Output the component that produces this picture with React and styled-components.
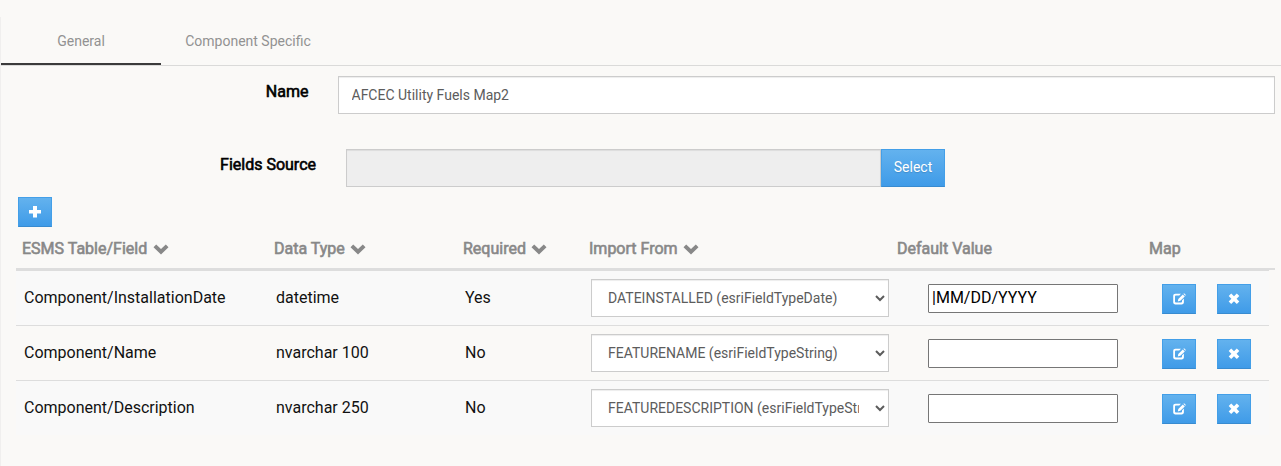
import React from "react";
import styled, { createGlobalStyle, css } from "styled-components";

const GlobalStyle = createGlobalStyle`
  *, *::before, *::after { box-sizing: border-box; }
  body {
    margin: 0;
    background: #faf9f7;
    color: #000;
    font-family: Roboto, "Liberation Sans", sans-serif;
    font-size: 16px;
    line-height: 24px;
  }
`;

const Page = styled.div`
  height: 466px;
  padding-top: 17px;
  overflow: hidden;
`;

const Panel = styled.main`
  height: 449px;
  border-left: 1px solid #f0efee;
`;

const Tabs = styled.nav`
  display: flex;
  height: 49px;
  border-bottom: 1px solid #dadad9;
`;

const Tab = styled.a`
  display: flex;
  align-items: center;
  justify-content: center;
  width: ${(p) => p.$width}px;
  height: 48px;
  border-bottom: 2px solid ${(p) => (p.$active ? "#3b3b3b" : "transparent")};
  color: #929292;
  font-size: 14px;
  padding-top: 2px;
`;

const heavy = css`
  -webkit-text-stroke: 0.6px currentColor;
`;

const FormRow = styled.div`
  display: flex;
  align-items: flex-start;
  padding: ${(p) => p.$padding};
`;

const Label = styled.label`
  width: ${(p) => p.$width}px;
  padding-top: 4px;
  text-align: right;
  ${heavy}
`;

const control = css`
  height: 38px;
  border: 1px solid #ccc;
  border-radius: 0;
  padding: 6px 12px;
  background: #fff;
  color: #5c5c5c;
  font-family: inherit;
  font-size: 14px;
  box-shadow: inset 0 1px 1px rgba(0, 0, 0, 0.075);
`;

const TextControl = styled.input`
  ${control}
  width: ${(p) => p.$width}px;
  margin-left: ${(p) => p.$gap}px;
  padding-left: 12.5px;
  &:disabled { background: #eee; }
`;

const BlueButton = styled.button`
  display: flex;
  align-items: center;
  justify-content: center;
  flex: none;
  width: ${(p) => p.$width || 34}px;
  height: ${(p) => p.$height || 30}px;
  padding: 0 0 ${(p) => p.$lift || 0}px;
  border: 1px solid #439fe8;
  border-bottom-color: #388bd0;
  border-radius: 0;
  background: linear-gradient(#63b2ee, #3f9be8);
  color: #fff;
  font-family: inherit;
  font-size: 14px;
  text-shadow: 0 1px 1px rgba(0, 0, 0, 0.15);
`;

const Toolbar = styled.div`
  padding: 10px 0 0 17px;
`;

const Table = styled.section`
  padding: 0 6px 0 15px;
`;

const columns = css`
  display: grid;
  grid-template-columns: 252px 189px 126px 308px 252px 1fr;
`;

const HeaderRow = styled.div`
  ${columns}
  height: 43px;
  padding-top: 10px;
  border-bottom: 2px solid #ddd;
  color: #888;
`;

const HeaderCell = styled.div`
  display: flex;
  gap: 5.5px;
  padding-left: 6px;
  ${heavy}
`;

const Row = styled.div`
  ${columns}
  width: 1253px;
  height: 55px;
  border-top: 1px solid #ddd;
  background: ${(p) => (p.$striped ? "#f9f9f9" : "transparent")};
`;

const Cell = styled.div`
  padding: 15px 0 0 8px;
  color: #111;
`;

const SelectCell = styled.div`
  padding: 8px 0 0 8px;
`;

const DefaultCell = styled.div`
  padding: 13px 0 0 37px;
`;

const ActionCell = styled.div`
  display: flex;
  gap: 21px;
  padding: 13px 0 0 19px;
`;

const SourceSelect = styled.select`
  ${control}
  width: 298px;
  padding-right: 13px;
`;

const DefaultInput = styled.input`
  display: block;
  width: 190px;
  height: 29px;
  padding: 0 3px 2px;
  border: 1px solid #767676;
  border-radius: 1px;
  background: #fff;
  color: #000;
  font-family: inherit;
  font-size: 16px;
`;

const Glyph = styled.svg`
  display: block;
  flex: none;
  fill: currentColor;
`;

const Chevron = () => (
  <Glyph width="16" height="24" viewBox="0 0 16 24">
    <path d="M.5 10.2 3.2 7.5 8 12.1l4.8-4.6 2.7 2.7L8 17.5z" />
  </Glyph>
);

const Plus = () => (
  <Glyph width="12" height="12" viewBox="0 0 12 12">
    <path d="M4 0h4v4h4v3.500H8V11.500H4V7.500H0V4h4z" />
  </Glyph>
);

const Edit = () => (
  <Glyph width="14" height="12" viewBox="0 0 14 12">
    <path d="M9 .8 7.200 2.500H3.900c-.6 0-.9.300-.9.900v5.200c0 .6.300.9.900.9h5.200c.6 0 .9-.300.9-.9V7.500l1.900-1.900v3.600c0 1.300-.9 2.200-2.200 2.200H3.400c-1.300 0-2.200-.9-2.200-2.200V3C1.200 1.700 2.100.8 3.400.8z" />
    <path d="m10.800 1.500 2 2-4.500 4.300-2.500.7.500-2.600zM11.400.8l.7-.6 1.800 1.800-.7.800z" />
  </Glyph>
);

const Remove = () => (
  <Glyph width="12" height="12" viewBox="0 0 12 12">
    <path d="M3.200.6 6 3.200 8.800.6l2.500 2.400-2.700 2.800 2.700 2.700-2.500 2.500L6 8.300 3.200 11 .7 8.500l2.700-2.700L.7 3z" />
  </Glyph>
);

const headers = [
  ["ESMS Table/Field", true],
  ["Data Type", true],
  ["Required", true],
  ["Import From", true],
  ["Default Value", false],
  ["Map", false],
];

const rows = [
  ["Component/InstallationDate", "datetime", "Yes", "DATEINSTALLED (esriFieldTypeDate)", "|MM/DD/YYYY"],
  ["Component/Name", "nvarchar 100", "No", "FEATURENAME (esriFieldTypeString)", ""],
  ["Component/Description", "nvarchar 250", "No", "FEATUREDESCRIPTION (esriFieldTypeString)", ""],
];

export default function App() {
  return (
    <Page>
      <GlobalStyle />
      <Panel>
        <Tabs>
          <Tab $active $width={160}>General</Tab>
          <Tab $width={174}>Component Specific</Tab>
        </Tabs>
        <FormRow $padding="10px 0 0">
          <Label $width={307.5}>Name</Label>
          <TextControl $width={937} $gap={29.5} defaultValue="AFCEC Utility Fuels Map2" />
        </FormRow>
        <FormRow $padding="35px 0 0">
          <Label $width={315}>Fields Source</Label>
          <TextControl $width={535} $gap={30} disabled />
          <BlueButton $width={64} $height={38} $lift={2}>Select</BlueButton>
        </FormRow>
        <Toolbar>
          <BlueButton aria-label="Add field"><Plus /></BlueButton>
        </Toolbar>
        <Table>
          <HeaderRow>
            {headers.map(([title, sortable]) => (
              <HeaderCell key={title}>
                {title}
                {sortable && <Chevron />}
              </HeaderCell>
            ))}
          </HeaderRow>
          {rows.map(([field, type, required, source, value], i) => (
            <Row key={field} $striped={i % 2 === 0}>
              <Cell>{field}</Cell>
              <Cell>{type}</Cell>
              <Cell>{required}</Cell>
              <SelectCell>
                <SourceSelect><option>{source}</option></SourceSelect>
              </SelectCell>
              <DefaultCell><DefaultInput defaultValue={value} /></DefaultCell>
              <ActionCell>
                <BlueButton aria-label="Edit"><Edit /></BlueButton>
                <BlueButton aria-label="Remove"><Remove /></BlueButton>
              </ActionCell>
            </Row>
          ))}
        </Table>
      </Panel>
    </Page>
  );
}
